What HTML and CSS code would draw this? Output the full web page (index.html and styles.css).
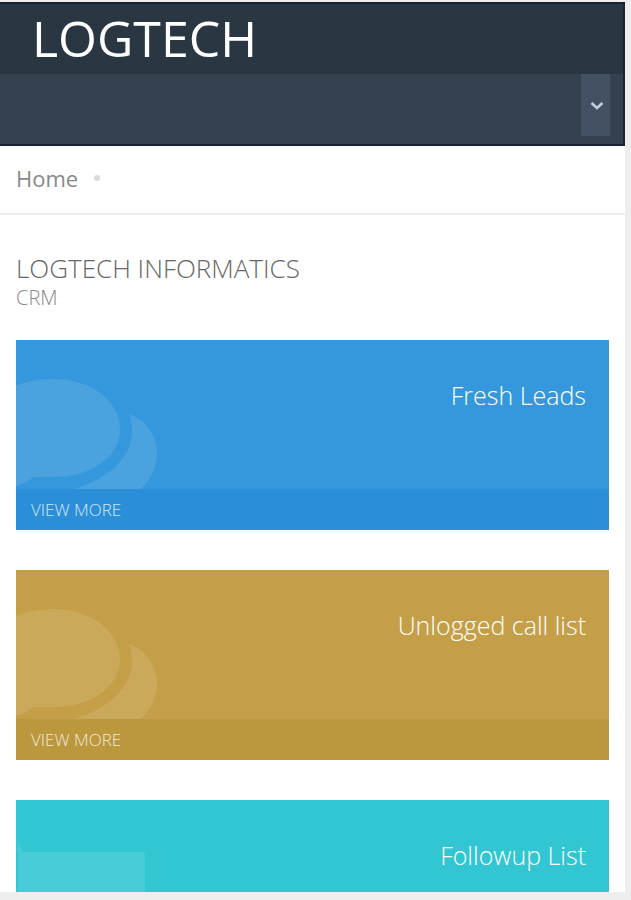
FILE: index.html
```html
<!DOCTYPE html>
<html lang="en">
<head>
<meta charset="utf-8">
<meta name="viewport" content="width=device-width, initial-scale=1">
<title>LOGTECH</title>
<link rel="stylesheet" href="styles.css">
</head>
<body>
<div class="page">
  <header class="header">
    <a class="brand" href="#">LOGTECH</a>
    <div class="toolbar">
      <button class="toggle" type="button" aria-label="Account menu">
        <svg width="14" height="10" viewBox="0 0 14 10" aria-hidden="true"><path d="M1.500 2l5.500 5 5.500-5" fill="none" stroke="currentColor" stroke-width="2.600"/></svg>
      </button>
    </div>
  </header>
  <nav class="breadcrumb" aria-label="Breadcrumb">
    <a href="#">Home</a><span class="dot"></span>
  </nav>
  <main class="content">
    <h1 class="title">LOGTECH INFORMATICS</h1>
    <p class="subtitle">CRM</p>
    <section class="tile blue">
      <svg class="art" width="160" height="149" viewBox="0 0 160 149" aria-hidden="true">
        <path d="M0 46C11 41 24 39 38 39c37 0 66 22 66 50s-29 48-66 48H18Q10 143 0 146z"/>
        <path d="M113 74C130 80 141 96 141 113q0 20-16 36H58C92 139 116 118 116 91q0-10-3-17z"/>
      </svg>
      <h2 class="name">Fresh Leads</h2>
      <a class="more" href="#">VIEW MORE</a>
    </section>
    <section class="tile gold">
      <svg class="art" width="160" height="149" viewBox="0 0 160 149" aria-hidden="true">
        <path d="M0 46C11 41 24 39 38 39c37 0 66 22 66 50s-29 48-66 48H18Q10 143 0 146z"/>
        <path d="M113 74C130 80 141 96 141 113q0 20-16 36H58C92 139 116 118 116 91q0-10-3-17z"/>
      </svg>
      <h2 class="name">Unlogged call list</h2>
      <a class="more" href="#">VIEW MORE</a>
    </section>
    <section class="tile teal">
      <svg class="art" width="160" height="149" viewBox="0 0 160 149" aria-hidden="true">
        <path d="M2 149V41l5 11h119q3 0 3 4v93z"/>
      </svg>
      <h2 class="name">Followup List</h2>
    </section>
  </main>
</div>
</body>
</html>
```
FILE: styles.css
```css
* {
  box-sizing: border-box;
}

body {
  display: flex;
  height: 100vh;
  margin: 0;
  padding: 2px 6px 8px 0;
  overflow: hidden;
  background: #eee;
  color: #888;
  font-family: "Open Sans", sans-serif;
}

.page {
  flex: 1;
  overflow: hidden;
  background: #fff;
}

a {
  color: inherit;
  text-decoration: none;
}

.header {
  border: solid #182334;
  border-width: 2px 2px 2px 0;
  background: #364150;
}

.brand {
  display: block;
  padding: 0 32px 2px;
  background: #2b3643;
  color: #fff;
  font-size: 50px;
  line-height: 68px;
}

.toolbar {
  display: flex;
  justify-content: flex-end;
  height: 70px;
  padding: 0 13px 8px 0;
}

.toggle {
  display: flex;
  align-items: center;
  justify-content: center;
  width: 29px;
  padding: 2px 0 0 2px;
  border: 0;
  background: #435163;
  color: #c0cfdd;
}

.breadcrumb {
  display: flex;
  align-items: center;
  gap: 16px;
  height: 69px;
  padding: 0 16px 4px;
  border-bottom: 2px solid #eee;
  font-size: 22px;
}

.dot {
  width: 6px;
  height: 6px;
  border-radius: 50%;
  background: #d8dbdb;
}

.content {
  padding: 36px 16px;
}

.title,
.subtitle,
.name {
  margin: 0;
  font-weight: 300;
}

.title {
  color: #666;
  font-size: 26px;
  line-height: 35px;
}

.subtitle {
  margin-bottom: 30px;
  font-size: 20px;
  line-height: 24px;
}

.tile {
  position: relative;
  display: flex;
  flex-direction: column;
  justify-content: space-between;
  height: 190px;
  margin-bottom: 40px;
  overflow: hidden;
  color: #fff;
}

.blue {
  background: #3598dc;
}

.gold {
  background: #c49f47;
}

.teal {
  background: #32c5d2;
}

.art {
  position: absolute;
  top: 0;
  left: 0;
  fill: #fff;
  opacity: 0.1;
}

.name {
  padding: 37px 23px 0;
  font-size: 25px;
  line-height: 36px;
  text-align: right;
}

.more {
  padding: 0 15px;
  color: rgb(255 255 255 / 80%);
  font-size: 17px;
  font-weight: 300;
  line-height: 41px;
}

.blue .more {
  background: #2a8fd8;
}

.gold .more {
  background: #bb973d;
}
```
